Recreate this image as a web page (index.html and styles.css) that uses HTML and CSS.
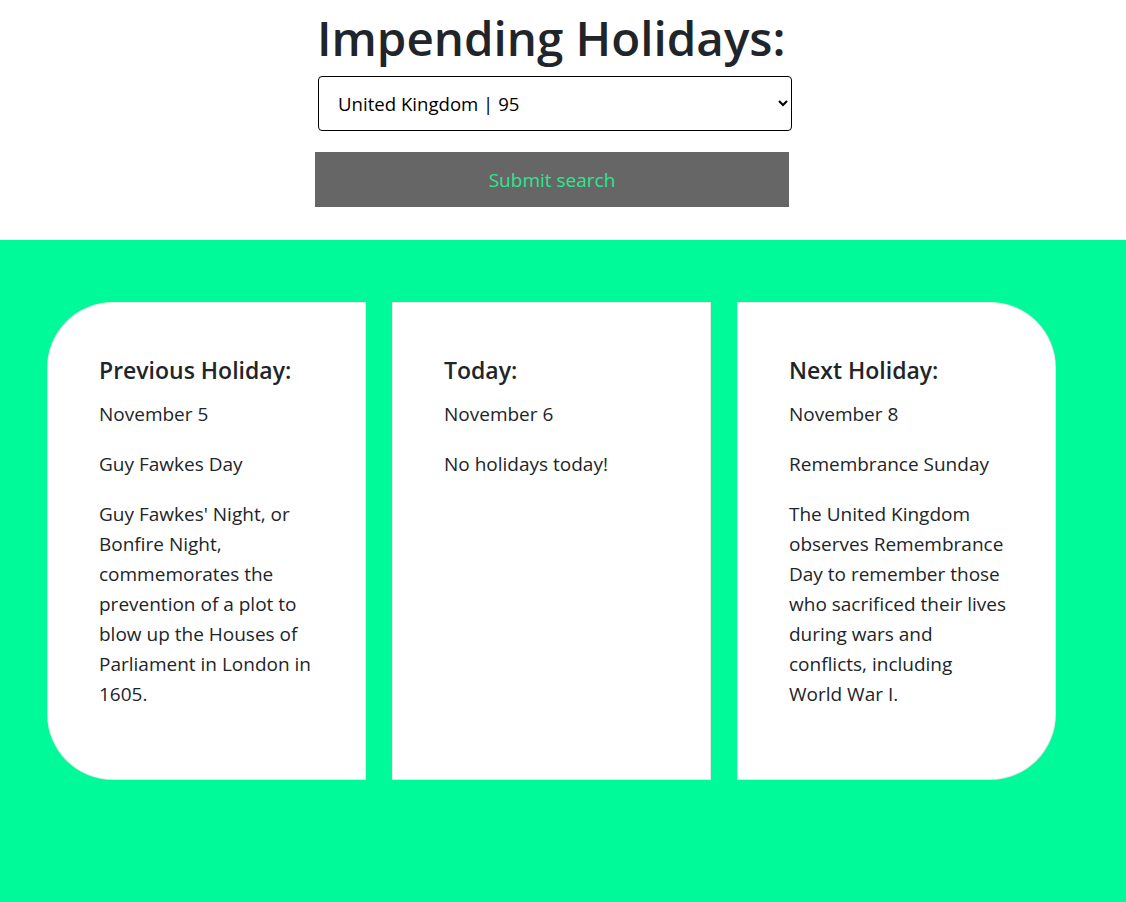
FILE: index.html
```html
<!DOCTYPE html>
<html lang="en">
<head>
<meta charset="utf-8">
<title>Impending Holidays</title>
<link rel="stylesheet" href="styles.css">
</head>
<body>
<header class="top">
  <h1 class="title">Impending Holidays:</h1>
  <select class="country">
    <option>United Kingdom | 95</option>
  </select>
  <button class="submit" type="button">Submit search</button>
</header>
<main class="band">
  <section class="card card-left">
    <h4 class="card-title">Previous Holiday:</h4>
    <p>November 5</p>
    <p>Guy Fawkes Day</p>
    <p>Guy Fawkes' Night, or Bonfire Night, commemorates the prevention of a plot to blow up the Houses of Parliament in London in 1605.</p>
  </section>
  <section class="card">
    <h4 class="card-title">Today:</h4>
    <p>November 6</p>
    <p>No holidays today!</p>
  </section>
  <section class="card card-right">
    <h4 class="card-title">Next Holiday:</h4>
    <p>November 8</p>
    <p>Remembrance Sunday</p>
    <p>The United Kingdom observes Remembrance Day to remember those who sacrificed their lives during wars and conflicts, including World War I.</p>
  </section>
</main>
</body>
</html>
```
FILE: styles.css
```css
* { box-sizing: border-box; }
html, body { margin: 0; padding: 0; }
body {
  font-family: "Open Sans", "Noto Sans", sans-serif;
  color: #212529;
  background: #00fa9a;
}
.top {
  background: #fff;
  height: 240px;
  display: flex;
  flex-direction: column;
  align-items: flex-start;
  padding-left: 315px;
}
.title {
  margin: 4px 0 0 2px;
  font-size: 47.5px;
  font-weight: 600;
  line-height: 68px;
  letter-spacing: 0;
}
.country {
  margin: 4px 0 0 3px;
  width: 474px;
  height: 55px;
  font-family: inherit;
  font-size: 18.6px;
  color: #000;
  padding: 0 12px 0 15px;
  border: 1px solid #000;
  border-radius: 4px;
  background: #fff;
}
.submit {
  margin-top: 21px;
  width: 474px;
  height: 55px;
  border: 0;
  background: #666;
  color: #2ee68f;
  font-family: inherit;
  font-size: 19px;
}
.band {
  display: flex;
  align-items: stretch;
  gap: 26px;
  padding: 62px 0 123px 47px;
}
.card {
  width: 319px;
  background: #fff;
  border: 1px solid rgba(0,0,0,0.1);
  padding: 50px 45px 50px 51px;
}
.card-left { border-radius: 66px 0 0 66px; }
.card-right { border-radius: 0 66px 66px 0; }
.card-title {
  margin: 0 0 12px;
  font-size: 23px;
  font-weight: 600;
  line-height: 34px;
}
.card p {
  margin: 0 0 20px;
  font-size: 19px;
  line-height: 30px;
}
```
